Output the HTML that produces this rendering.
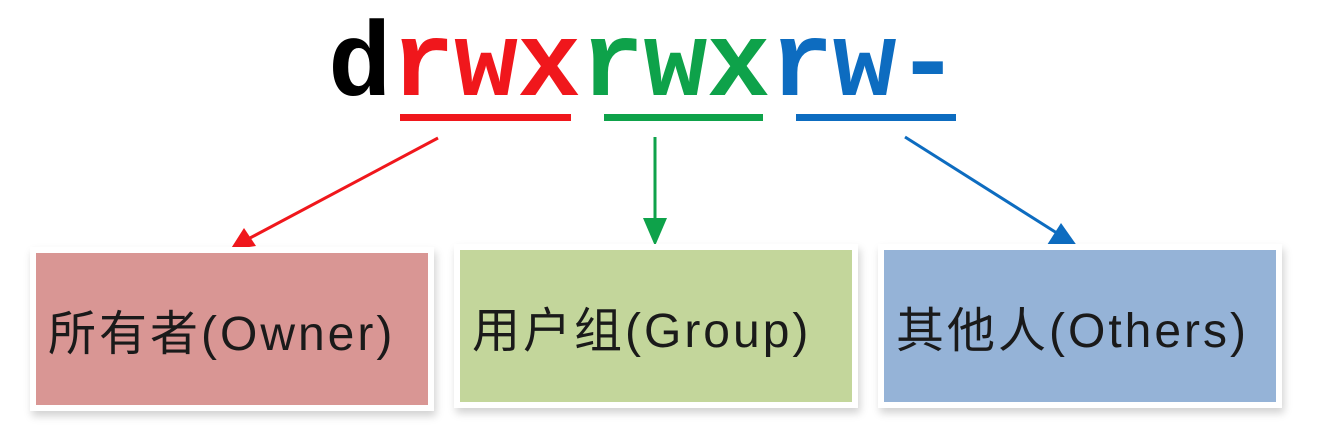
<!DOCTYPE html>
<html><head><meta charset="utf-8"><style>
html,body{margin:0;padding:0;background:#fff;}
body{width:1317px;height:437px;position:relative;overflow:hidden;}
.t{position:absolute;left:328px;top:2px;font-family:"Liberation Mono",monospace;font-weight:bold;font-size:106px;line-height:130px;letter-spacing:-0.5px;white-space:nowrap;}
.box{position:absolute;box-shadow:0 0 0 6px #fff,2px 5px 8px 6px rgba(0,0,0,0.18);font-family:"Liberation Sans","Noto Sans CJK SC",sans-serif;font-size:48px;letter-spacing:3px;color:#1a1a1a;line-height:164px;padding-left:12px;box-sizing:border-box;white-space:nowrap;}
</style></head><body>
<div class="t"><span style="color:#000">d</span><span style="color:#f0171c">rwx</span><span style="color:#0ea24a">rwx</span><span style="color:#0d6cc0">rw-</span></div>
<svg width="1317" height="437" style="position:absolute;left:0;top:0">
<rect x="400" y="114" width="171" height="7" fill="#f0171c"/>
<rect x="604" y="114" width="159" height="7" fill="#0ea24a"/>
<rect x="796" y="114" width="160" height="7" fill="#0d6cc0"/>
<line x1="438" y1="138" x2="250" y2="238" stroke="#f0171c" stroke-width="3"/>
<polygon points="230,250 244,228 256,246" fill="#f0171c"/>
<line x1="655" y1="137" x2="655" y2="222" stroke="#0ea24a" stroke-width="3"/>
<polygon points="643,218 667,218 655,246" fill="#0ea24a"/>
<line x1="905" y1="137" x2="1060" y2="235" stroke="#0d6cc0" stroke-width="3"/>
<polygon points="1080,250 1047,245 1061,223" fill="#0d6cc0"/>
</svg>
<div class="box" style="left:36px;top:253px;width:392px;height:152px;background:#d99694">所有者(Owner)</div>
<div class="box" style="left:460px;top:250px;width:392px;height:152px;background:#c3d69b">用户组(Group)</div>
<div class="box" style="left:884px;top:250px;width:392px;height:152px;background:#95b3d7">其他人(Others)</div>
</body></html>
